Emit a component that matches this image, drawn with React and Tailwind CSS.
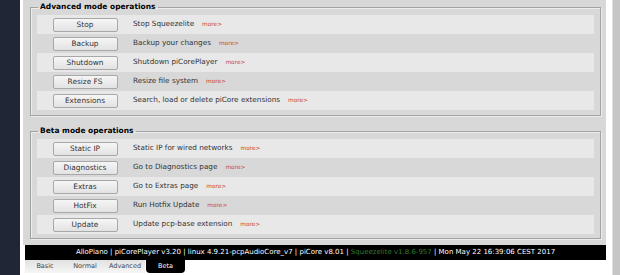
import React from 'react'

const advanced = [
  { label: 'Stop', text: 'Stop Squeezelite' },
  { label: 'Backup', text: 'Backup your changes' },
  { label: 'Shutdown', text: 'Shutdown piCorePlayer' },
  { label: 'Resize FS', text: 'Resize file system' },
  { label: 'Extensions', text: 'Search, load or delete piCore extensions' },
]

const beta = [
  { label: 'Static IP', text: 'Static IP for wired networks' },
  { label: 'Diagnostics', text: 'Go to Diagnostics page' },
  { label: 'Extras', text: 'Go to Extras page' },
  { label: 'HotFix', text: 'Run Hotfix Update' },
  { label: 'Update', text: 'Update pcp-base extension' },
]

function Section({ title, rows, className }) {
  return (
    <fieldset
      className={`border border-[#a2a2a2] px-[6px] pt-[3px] shadow-[inset_1px_1px_0_#ececec,1px_1px_0_#ececec] ${className}`}
    >
      <legend className="ml-[1px] px-[2px] text-[7.5px] font-bold leading-[10px] text-black">
        {title}
      </legend>
      {rows.map((row, i) => (
        <div
          key={row.label}
          className={`flex h-[19px] items-center ${i % 2 === 0 ? 'bg-[#e8e8e8]' : 'bg-[#d8d8d8]'}`}
        >
          <div className="flex w-[96px] justify-center">
            <button className="h-[14px] w-[65px] rounded-[2px] border border-[#a8a8a8] bg-gradient-to-b from-[#f6f6f6] to-[#e2e2e2] text-[7.4px] leading-[12px] text-[#333]">
              {row.label}
            </button>
          </div>
          <span className="text-[7.25px] text-[#333]">{row.text}</span>
          <span className="ml-[8px] text-[5.8px] text-[#c8462c]">more&gt;</span>
        </div>
      ))}
    </fieldset>
  )
}

export default function App() {
  const tabs = ['Basic', 'Normal', 'Advanced']

  return (
    <div className="flex h-[275px] w-[620px] overflow-hidden bg-white font-['DejaVu_Sans',Verdana,sans-serif]">
      {/* left nav strip */}
      <div className="w-[20px] shrink-0 bg-[#1f2636]" />

      <div className="w-[586px] shrink-0">
        <div className="ml-[3px] bg-[#d8d8d8] pb-[6px] pl-[7px] pr-[5px] pt-[2px]">
          <Section title="Advanced mode operations" rows={advanced} className="pb-[5px]" />
          <Section title="Beta mode operations" rows={beta} className="mt-[10px] pb-[4px]" />
        </div>

        {/* footer */}
        <div className="ml-[5px] flex h-[15px] items-center justify-center bg-black text-[7px] text-white">
          <span>
            AlloPiano | piCorePlayer v3.20 | linux 4.9.21-pcpAudioCore_v7 | piCore v8.01 |{' '}
            <span className="text-[#2f7a2f]">Squeezelite v1.8.6-957</span> | Mon May 22 16:39:06 CEST 2017
          </span>
        </div>

        {/* mode tabs */}
        <div className="ml-[5px] flex">
          {tabs.map((t) => (
            <div
              key={t}
              className="flex h-[13px] w-[40px] items-center justify-center bg-gradient-to-b from-[#e2e2e2] to-[#f6f6f6] text-[6.5px] text-[#444]"
            >
              {t}
            </div>
          ))}
          <div className="ml-[1px] flex h-[13px] w-[39px] items-center justify-center rounded-b-[4px] bg-black text-[6.5px] text-white">
            Beta
          </div>
        </div>
      </div>

      {/* scrollbar edge */}
      <div className="w-[6px] shrink-0 bg-white" />
      <div className="w-[8px] shrink-0 border-l border-[#e0e0e0] bg-[#c6c6c6]" />
    </div>
  )
}
